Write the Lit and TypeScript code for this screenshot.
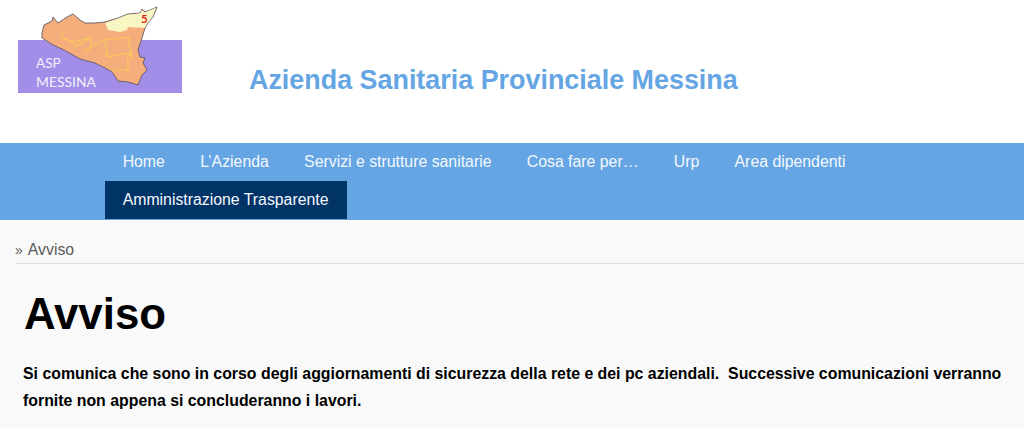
import { LitElement, html, css } from 'lit';
import { customElement } from 'lit/decorators.js';

const MENU = ['Home', 'L’Azienda', 'Servizi e strutture sanitarie', 'Cosa fare per…', 'Urp', 'Area dipendenti'];

@customElement('app-root')
export class AppRoot extends LitElement {
  static styles = css`
    :host {
      display: block;
      height: 428px;
      overflow: hidden;
      background: #f9f9f9;
      font-family: 'Liberation Sans', Arial, sans-serif;
    }
    .header {
      height: 143px;
      background: #fff;
      display: flex;
    }
    .logo {
      display: block;
      margin: 6px 0 0 17px;
      width: 166px;
      height: 90px;
      flex: none;
    }
    .site-name {
      margin: 65px 0 0 66px;
      font-size: 26.9px;
      line-height: 31px;
      font-weight: bold;
      color: #65a5e3;
    }
    .nav {
      height: 77px;
      background: #65a5e3;
      padding: 0 100px 0 105px;
      display: flex;
      flex-wrap: wrap;
      align-content: flex-start;
    }
    .nav a {
      display: block;
      padding: 0 17.65px;
      height: 38px;
      line-height: 37px;
      font-size: 15.84px;
      color: #f4f8fd;
    }
    .nav a.active {
      background: #003366;
      width: 242px;
      box-sizing: border-box;
      white-space: nowrap;
    }
    .crumb {
      margin: 0 0 0 15px;
      height: 44px;
      box-sizing: border-box;
      padding-top: 20px;
      border-bottom: 1px solid #ddd;
      display: flex;
      align-items: baseline;
      gap: 5px;
      font-size: 15.84px;
      line-height: 19px;
      color: #5c5c5c;
    }
    .crumb .sep {
      font-size: 14px;
    }
    .content {
      padding: 0 0 0 24px;
    }
    h1 {
      margin: 23px 0 0;
      font-size: 43.8px;
      line-height: 54px;
      font-weight: bold;
      color: #000;
    }
    p {
      margin: 19px 0 0 -1px;
      font-size: 15.87px;
      line-height: 27px;
      font-weight: bold;
      color: #000;
      width: 990px;
    }
  `;

  render() {
    return html`
      <div class="header">
        <svg class="logo" viewBox="17 6 166 90" aria-hidden="true">
          <defs>
            <filter id="soft"><feGaussianBlur stdDeviation="0.35" /></filter>
          </defs>
          <rect x="18" y="40" width="164" height="53" fill="#a28ee8" />
          <g filter="url(#soft)">
            <path
              d="M42 38 L42 33 L44 25 L52 21 L53 17 L58 23 L67 17 L73 14 L80 20 L85 23 L95 23 L105 22 L118 18 L128 14 L140 13 L142 9 L145 12 L157 7 L153 17 L148 23 L145 28 L142 38 L138 50 L140 57 L145 58 L143 63 L147 70 L142 75 L138 85 L128 82 L118 81 L112 72 L105 68 L95 63 L80 59 L73 55 L62 49 L53 45 Z"
              fill="#f6ad7c"
              stroke="#5f5a66"
              stroke-width="0.9"
              stroke-linejoin="round"
            />
            <path
              d="M105 23 L118 18.5 L128 14.5 L140 13.5 L142 10 L145 12.5 L156 7.5 L152.5 17 L147.5 23 L144.5 28 L128 27 L127 30 L120 32 L108 30 Z"
              fill="#f8f6c2"
            />
            <path
              d="M62 32 L62 38 L73 42 L75 47 L90 38 L92 46 L105 40 L108 57 L105 53 M73 42 L90 38 M105 40 L128 37 L132 57 L128 53 L128 70 L115 70 L112 72 M108 57 L128 53 M85 52 L92 46"
              fill="none"
              stroke="#f8cb58"
              stroke-width="1.1"
            />
          </g>
          <text x="141" y="23" font-family="Lato, sans-serif" font-size="11.5" font-weight="700" fill="#e02a1c">5</text>
          <text x="36" y="68" font-family="Lato, sans-serif" font-size="13.5" fill="#f2f0fb">ASP</text>
          <text x="36" y="87" font-family="Lato, sans-serif" font-size="13.9" fill="#f2f0fb">MESSINA</text>
        </svg>
        <div class="site-name">Azienda Sanitaria Provinciale Messina</div>
      </div>
      <nav class="nav">
        ${MENU.map((item) => html`<a>${item}</a>`)}
        <a class="active">Amministrazione Trasparente</a>
      </nav>
      <div class="crumb"><span class="sep">»</span><span>Avviso</span></div>
      <div class="content">
        <h1>Avviso</h1>
        <p>
          Si comunica che sono in corso degli aggiornamenti di sicurezza della rete e dei pc aziendali.&nbsp;
          Successive comunicazioni verranno fornite non appena si concluderanno i lavori.
        </p>
      </div>
    `;
  }
}
